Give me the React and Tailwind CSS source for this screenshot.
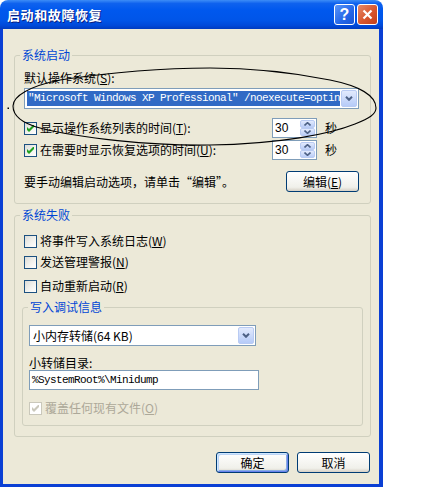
import React from "react";

function Check({ checked = false, disabled = false }) {
  return (
    <span
      className={
        disabled
          ? "w-[13px] h-[13px] shrink-0 border border-[#CAC8BB] bg-white flex items-center justify-center"
          : "w-[13px] h-[13px] shrink-0 border border-[#1C5180] bg-[linear-gradient(135deg,#DCDCD7_0%,#F4F4F0_60%,#FFFFFF_100%)] flex items-center justify-center"
      }
    >
      {checked && (
        <svg width="7" height="7" viewBox="0 0 7 7">
          <path d="M0 2 L2 4 L6 0 L7 0 L7 2 L2 7 L0 5 Z" fill={disabled ? "#CAC8BB" : "#21A121"} />
        </svg>
      )}
    </span>
  );
}

function Arrow({ up }) {
  return (
    <svg width="7" height="4" viewBox="0 0 7 4">
      <path
        d={up ? "M0.5 3.5 L3.5 0.7 L6.5 3.5" : "M0.5 0.5 L3.5 3.3 L6.5 0.5"}
        stroke="#4D6185"
        strokeWidth="1.6"
        fill="none"
      />
    </svg>
  );
}

function SpinBtn({ up }) {
  return (
    <div className="flex-1 flex items-center justify-center rounded-[2px] border border-[#B9CBF3] bg-[linear-gradient(to_bottom,#E2EAFD,#BACDF7)]">
      <Arrow up={up} />
    </div>
  );
}

function Spin() {
  return (
    <div className="w-[45px] h-[20px] border border-[#7F9DB9] bg-white flex">
      <span className="flex-1 pl-[2px] leading-[18px] text-[12px] font-['Liberation_Sans',sans-serif]">30</span>
      <div className="w-[16px] flex flex-col py-[1px] pr-[1px]">
        <SpinBtn up />
        <SpinBtn />
      </div>
    </div>
  );
}

function DropBtn() {
  return (
    <div className="w-[16px] h-full shrink-0 rounded-[2px] border border-[#B9CBF3] bg-[linear-gradient(to_bottom,#E2EAFD,#B6CBF8)] flex items-center justify-center">
      <svg width="8" height="5" viewBox="0 0 8 5">
        <path d="M1 0.8 L4 3.8 L7 0.8" stroke="#4D6185" strokeWidth="2" fill="none" />
      </svg>
    </div>
  );
}

function Btn({ children, def = false }) {
  return (
    <div
      className={
        def
          ? "w-[73px] h-[21px] rounded-[3px] border border-[#003C74] bg-[linear-gradient(to_bottom,#FFFFFF,#F0F0EA_80%,#D6D0C5)] shadow-[inset_1px_1px_0_#CEE7FF,inset_-1px_-1px_0_#6982EE,inset_2px_2px_0_#BCD4F6,inset_-2px_-2px_0_#89ADE4] flex items-center justify-center text-[12px]"
          : "w-[73px] h-[21px] rounded-[3px] border border-[#003C74] bg-[linear-gradient(to_bottom,#FFFFFF,#F0F0EA_80%,#D6D0C5)] flex items-center justify-center text-[12px]"
      }
    >
      {children}
    </div>
  );
}

function Legend({ children }) {
  return (
    <legend className="ml-[5px] px-[2px] text-[12px] leading-[14px] text-[#0046D5]">{children}</legend>
  );
}

export default function App() {
  return (
    <div className="relative w-[434px] h-[488px] bg-white font-['Noto_Sans_CJK_SC','Noto_Sans',sans-serif] text-[12px] text-black">
      <div className="w-[383px] h-[487px] flex flex-col">
        {/* Title bar */}
        <div className="h-[29px] shrink-0 rounded-t-[8px] bg-[linear-gradient(to_bottom,#3D8DF7_0%,#0F62EE_12%,#0058EE_35%,#0055E8_70%,#0049D9_88%,#003BBF_100%)] flex items-center pl-[7px] pr-[5px]">
          <span className="flex-1 text-white font-bold text-[13px] tracking-[0.6px] [text-shadow:1px_1px_0_#0A1E80]">
            启动和故障恢复
          </span>
          <div className="flex gap-[2px]">
            <div className="w-[21px] h-[21px] rounded-[3px] border border-white bg-[linear-gradient(135deg,#5A95F8,#2366E8_60%,#1A55D4)] flex items-center justify-center text-white font-bold text-[16px] leading-none font-['Liberation_Sans',sans-serif]">
              ?
            </div>
            <div className="w-[21px] h-[21px] rounded-[3px] border border-white bg-[linear-gradient(135deg,#E58A6A,#D8562E_55%,#C23F1A)] flex items-center justify-center">
              <svg width="11" height="11" viewBox="0 0 11 11">
                <path d="M1.5 1.5 L9.5 9.5 M9.5 1.5 L1.5 9.5" stroke="white" strokeWidth="2.2" />
              </svg>
            </div>
          </div>
        </div>

        {/* Body */}
        <div className="flex-1 flex flex-col bg-[#ECE9D8] border-l-[3px] border-r-[4px] border-b-[3px] border-[#0A3FD4]">
          {/* Group 1 */}
          <fieldset className="ml-[11px] mt-[19px] w-[357px] border border-[#D0D0BF] rounded-[3px] px-0">
            <Legend>系统启动</Legend>
            <div className="pl-[9px] pb-[11px] flex flex-col">
              <div className="mt-[9px] h-[14px] leading-[14px]">
                默认操作系统(<span className="underline">S</span>):
              </div>
              <div className="mt-[3px] h-[21px] w-[335px] border border-[#7F9DB9] bg-white flex p-[1px]">
                <div className="flex-1 p-[1px] pr-[1px] overflow-hidden">
                  <div className="h-full bg-[#316AC5] text-white whitespace-nowrap overflow-hidden pl-[1px] text-[11px] tracking-[-0.6px] leading-[15px] font-['Liberation_Mono',monospace]">
                    "Microsoft Windows XP Professional" /noexecute=optin
                  </div>
                </div>
                <DropBtn />
              </div>
              <div className="mt-[9px] h-[20px] flex items-center">
                <div className="w-[248px] flex items-center gap-[3px]">
                  <Check checked />
                  <span>
                    显示操作系统列表的时间(<span className="underline">T</span>):
                  </span>
                </div>
                <Spin />
                <span className="ml-[8px]">秒</span>
              </div>
              <div className="mt-[2px] h-[20px] flex items-center">
                <div className="w-[248px] flex items-center gap-[3px]">
                  <Check checked />
                  <span>
                    在需要时显示恢复选项的时间(<span className="underline">U</span>):
                  </span>
                </div>
                <Spin />
                <span className="ml-[8px]">秒</span>
              </div>
              <div className="mt-[11px] h-[21px] flex items-center">
                <span className="w-[262px]">要手动编辑启动选项，请单击“编辑”。</span>
                <Btn>
                  编辑(<span className="underline">E</span>)
                </Btn>
              </div>
            </div>
          </fieldset>

          {/* Group 2 */}
          <fieldset className="ml-[11px] mt-[4px] w-[357px] border border-[#D0D0BF] rounded-[3px] px-0">
            <Legend>系统失败</Legend>
            <div className="pl-[9px] pb-[10px] flex flex-col">
              <div className="mt-[11px] h-[16px] flex items-center gap-[3px]">
                <Check />
                <span>
                  将事件写入系统日志(<span className="underline">W</span>)
                </span>
              </div>
              <div className="mt-[5px] h-[16px] flex items-center gap-[3px]">
                <Check />
                <span>
                  发送管理警报(<span className="underline">N</span>)
                </span>
              </div>
              <div className="mt-[8px] h-[16px] flex items-center gap-[3px]">
                <Check />
                <span>
                  自动重新启动(<span className="underline">R</span>)
                </span>
              </div>

              {/* Inner group */}
              <fieldset className="ml-[-2px] mt-[6px] w-[341px] border border-[#D0D0BF] rounded-[3px] px-0">
                <Legend>写入调试信息</Legend>
                <div className="pl-[6px] pb-[9px] flex flex-col">
                  <div className="mt-[11px] h-[21px] w-[227px] border border-[#7F9DB9] bg-white flex p-[1px]">
                    <div className="flex-1 pl-[2px] leading-[17px] whitespace-nowrap overflow-hidden">
                      小内存转储(64 KB)
                    </div>
                    <DropBtn />
                  </div>
                  <div className="mt-[10px] h-[14px] leading-[14px]">小转储目录:</div>
                  <div className="h-[20px] w-[230px] border border-[#7F9DB9] bg-white pl-[2px] text-[11px] tracking-[-0.6px] leading-[18px] font-['Liberation_Mono',monospace] whitespace-nowrap">
                    %SystemRoot%\Minidump
                  </div>
                  <div className="mt-[10px] h-[16px] flex items-center gap-[3px] text-[#ACA899]">
                    <Check checked disabled />
                    <span>
                      覆盖任何现有文件(<span className="underline">O</span>)
                    </span>
                  </div>
                </div>
              </fieldset>
            </div>
          </fieldset>

          {/* Buttons */}
          <div className="mt-[15px] mr-[9px] flex justify-end gap-[8px]">
            <Btn def>确定</Btn>
            <Btn>取消</Btn>
          </div>
        </div>
      </div>

      {/* Hand-drawn annotation */}
      <svg className="absolute left-0 top-0 pointer-events-none" width="434" height="488" viewBox="0 0 434 488">
        <path
          d="M376 108 C376 96, 360 86, 330 80 C290 72, 250 68, 210 68 C150 68, 100 74, 60 80 C30 86, 13 96, 13 106 C13 118, 25 124, 40 128 C80 138, 150 146, 210 145 C280 144, 330 134, 355 124 C370 118, 376 114, 376 108 Z"
          stroke="#000"
          strokeWidth="1.1"
          fill="none"
        />
        <rect x="7.5" y="107.5" width="1.5" height="1.5" fill="#000" />
      </svg>
    </div>
  );
}
